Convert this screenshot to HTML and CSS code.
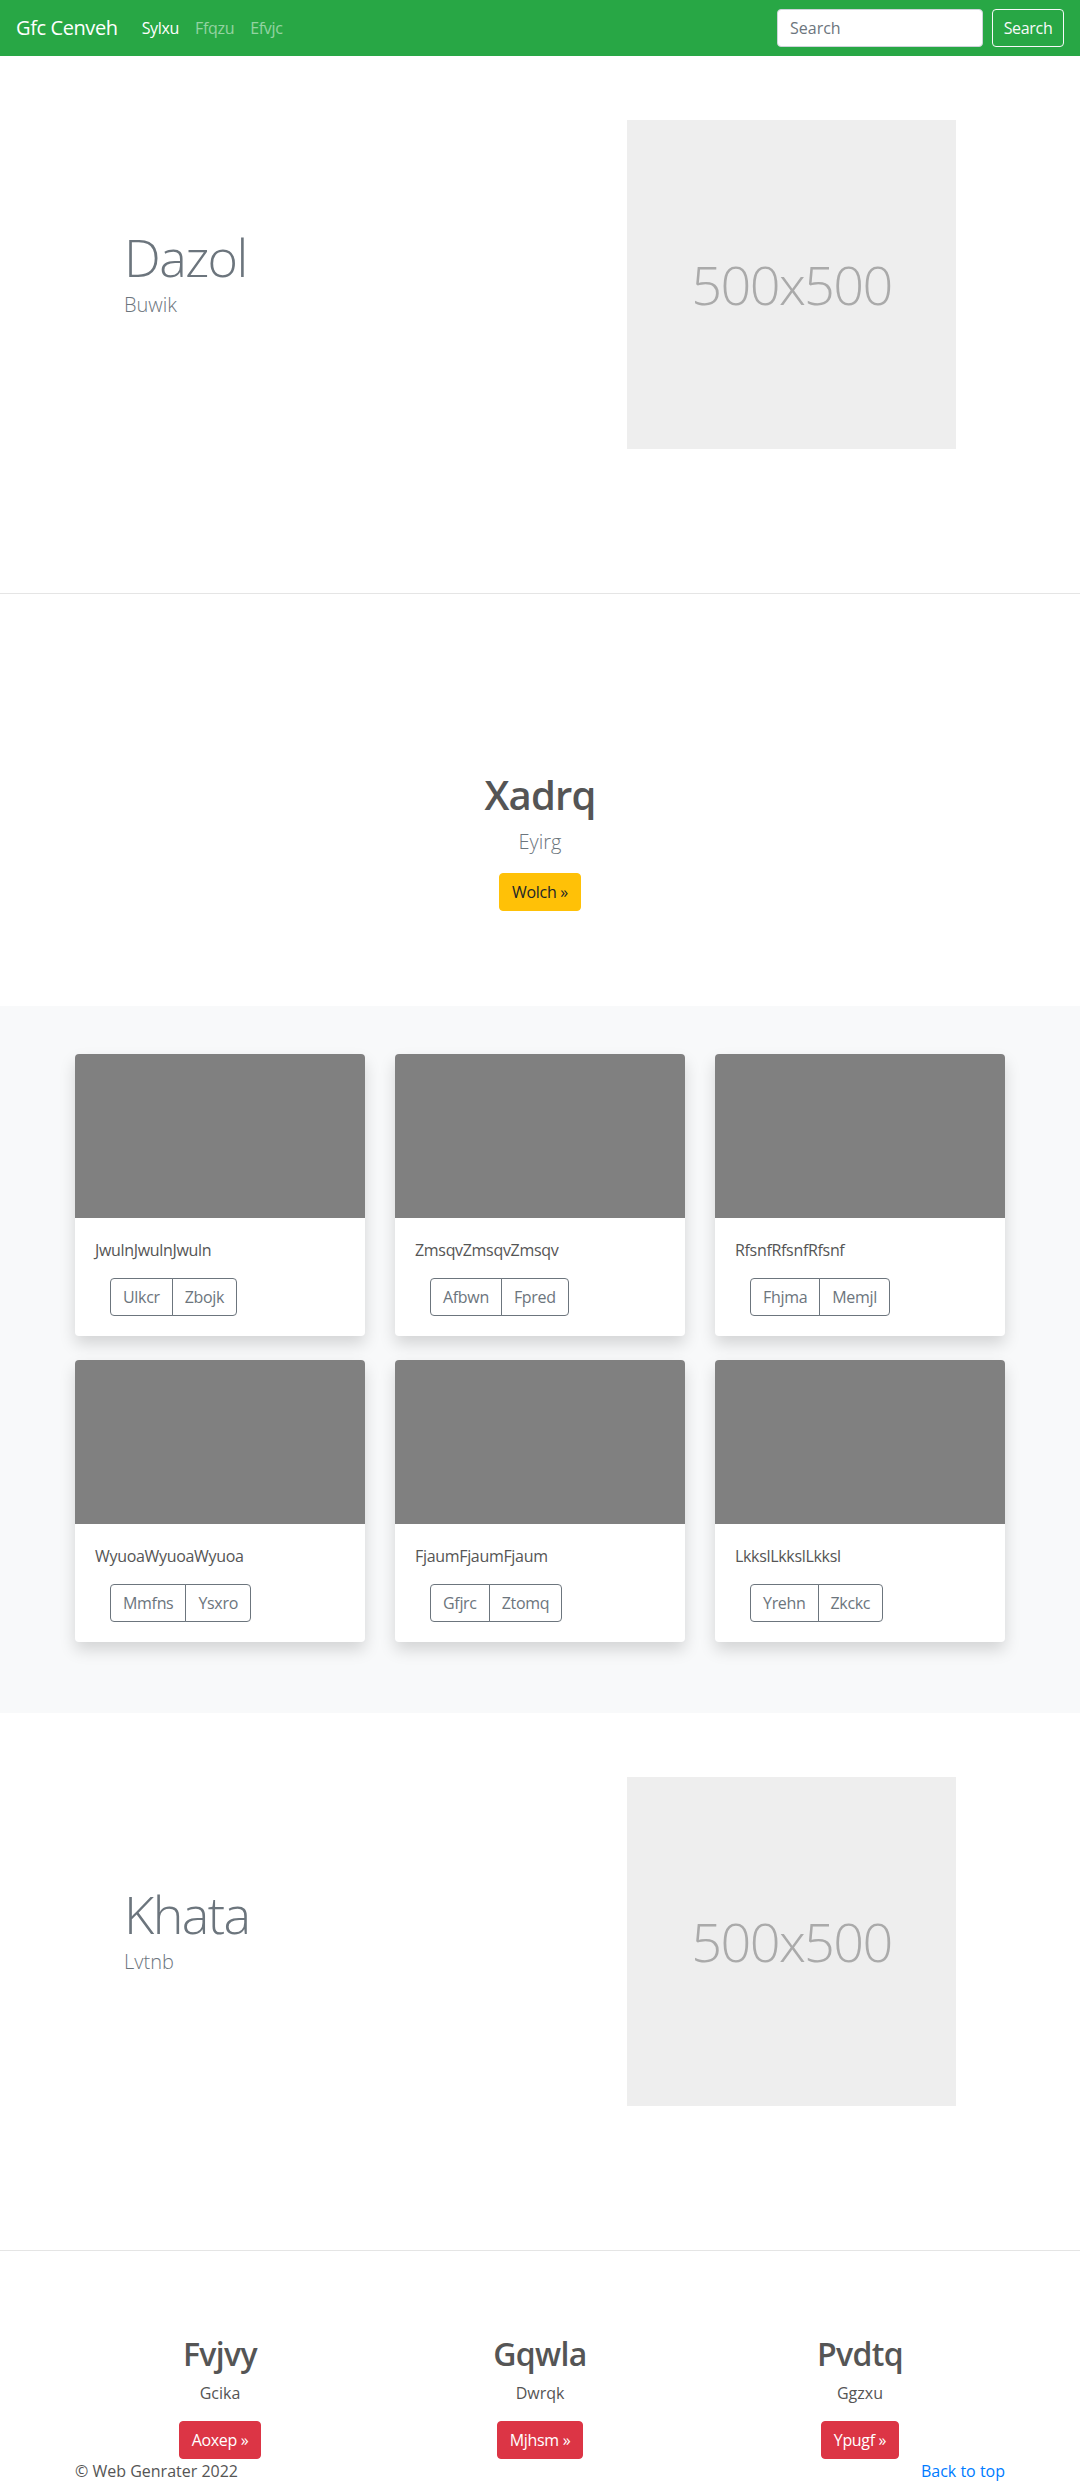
FILE: index.html
```html
<!DOCTYPE html>
<html lang="en">
<head>
<meta charset="utf-8">
<title>Gfc Cenveh</title>
<link rel="stylesheet" href="styles.css">
</head>
<body>
<header class="navbar">
  <a class="brand" href="#">Gfc Cenveh</a>
  <nav class="nav-links">
    <a class="nav-link active" href="#">Sylxu</a>
    <a class="nav-link" href="#">Ffqzu</a>
    <a class="nav-link" href="#">Efvjc</a>
  </nav>
  <form class="search">
    <input class="search-input" type="text" placeholder="Search">
    <button class="btn btn-outline-light" type="button">Search</button>
  </form>
</header>
<main>
  <section class="feature">
    <div class="feature-inner">
      <div class="feature-text">
        <h1 class="display">Dazol</h1>
        <p class="lead">Buwik</p>
      </div>
      <div class="feature-media">
        <div class="placeholder">500x500</div>
      </div>
    </div>
  </section>

  <section class="callout">
    <h1 class="callout-title">Xadrq</h1>
    <p class="lead">Eyirg</p>
    <a class="btn btn-warning" href="#">Wolch »</a>
  </section>

  <section class="album">
    <div class="album-grid">
      <div class="card">
        <div class="card-img"></div>
        <div class="card-body">
          <p class="card-text">JwulnJwulnJwuln</p>
          <div class="btn-group">
            <button class="btn btn-outline-secondary" type="button">Ulkcr</button>
            <button class="btn btn-outline-secondary" type="button">Zbojk</button>
          </div>
        </div>
      </div>
      <div class="card">
        <div class="card-img"></div>
        <div class="card-body">
          <p class="card-text">ZmsqvZmsqvZmsqv</p>
          <div class="btn-group">
            <button class="btn btn-outline-secondary" type="button">Afbwn</button>
            <button class="btn btn-outline-secondary" type="button">Fpred</button>
          </div>
        </div>
      </div>
      <div class="card">
        <div class="card-img"></div>
        <div class="card-body">
          <p class="card-text">RfsnfRfsnfRfsnf</p>
          <div class="btn-group">
            <button class="btn btn-outline-secondary" type="button">Fhjma</button>
            <button class="btn btn-outline-secondary" type="button">Memjl</button>
          </div>
        </div>
      </div>
      <div class="card">
        <div class="card-img"></div>
        <div class="card-body">
          <p class="card-text">WyuoaWyuoaWyuoa</p>
          <div class="btn-group">
            <button class="btn btn-outline-secondary" type="button">Mmfns</button>
            <button class="btn btn-outline-secondary" type="button">Ysxro</button>
          </div>
        </div>
      </div>
      <div class="card">
        <div class="card-img"></div>
        <div class="card-body">
          <p class="card-text">FjaumFjaumFjaum</p>
          <div class="btn-group">
            <button class="btn btn-outline-secondary" type="button">Gfjrc</button>
            <button class="btn btn-outline-secondary" type="button">Ztomq</button>
          </div>
        </div>
      </div>
      <div class="card">
        <div class="card-img"></div>
        <div class="card-body">
          <p class="card-text">LkkslLkkslLkksl</p>
          <div class="btn-group">
            <button class="btn btn-outline-secondary" type="button">Yrehn</button>
            <button class="btn btn-outline-secondary" type="button">Zkckc</button>
          </div>
        </div>
      </div>
    </div>
  </section>

  <section class="feature">
    <div class="feature-inner">
      <div class="feature-text">
        <h1 class="display">Khata</h1>
        <p class="lead">Lvtnb</p>
      </div>
      <div class="feature-media">
        <div class="placeholder">500x500</div>
      </div>
    </div>
  </section>

  <section class="columns">
    <div class="columns-inner">
      <div class="column">
        <h2 class="column-title">Fvjvy</h2>
        <p class="column-text">Gcika</p>
        <a class="btn btn-danger" href="#">Aoxep »</a>
      </div>
      <div class="column">
        <h2 class="column-title">Gqwla</h2>
        <p class="column-text">Dwrqk</p>
        <a class="btn btn-danger" href="#">Mjhsm »</a>
      </div>
      <div class="column">
        <h2 class="column-title">Pvdtq</h2>
        <p class="column-text">Ggzxu</p>
        <a class="btn btn-danger" href="#">Ypugf »</a>
      </div>
    </div>
  </section>
</main>
<footer class="footer">
  <p class="copyright">© Web Genrater 2022</p>
  <p class="back"><a href="#">Back to top</a></p>
</footer>
</body>
</html>
```

FILE: styles.css
```css
html, body {
  margin: 0;
  padding: 0;
}

body {
  font-family: "Open Sans", "Noto Sans", "DejaVu Sans", sans-serif;
  font-size: 16px;
  line-height: 1.5;
  color: #555;
  background: #fff;
}

/* Navbar */
.navbar {
  display: flex;
  align-items: center;
  height: 56px;
  padding: 0 16px;
  box-sizing: border-box;
  background: #28a745;
}

.brand {
  font-size: 20px;
  line-height: 30px;
  color: #fff;
  text-decoration: none;
  margin-right: 16px;
  letter-spacing: -0.02em;
}

.nav-links {
  display: flex;
}

.nav-link {
  padding: 8px;
  color: rgba(255, 255, 255, 0.5);
  text-decoration: none;
  letter-spacing: -0.02em;
}

.nav-link.active {
  color: #fff;
}

.search {
  margin: 0 0 0 auto;
  display: flex;
  gap: 9px;
}

.search-input {
  width: 206px;
  height: 38px;
  box-sizing: border-box;
  padding: 6px 12px;
  border: 1px solid #ced4da;
  border-radius: 4px;
  font-family: inherit;
  font-size: 16px;
  color: #495057;
  background: #fff;
  outline: none;
}

.search-input::placeholder {
  color: #6c757d;
}

/* Buttons */
.btn {
  display: inline-block;
  box-sizing: border-box;
  font-family: inherit;
  font-size: 16px;
  line-height: 24px;
  padding: 6px 12px;
  border: 1px solid transparent;
  border-radius: 4px;
  background: transparent;
  text-decoration: none;
  cursor: pointer;
  letter-spacing: -0.02em;
}

.btn-outline-light {
  width: 72px;
  padding: 6px 0;
  text-align: center;
  color: #f8f9fa;
  border-color: #f8f9fa;
}

.btn-warning {
  color: #212529;
  background: #ffc107;
  border-color: #ffc107;
}

.btn-danger {
  color: #fff;
  background: #dc3545;
  border-color: #dc3545;
}

.btn-outline-secondary {
  color: #6c757d;
  border-color: #6c757d;
  background: transparent;
}

/* Feature sections */
.feature {
  border-bottom: 1px solid #e5e5e5;
}

.feature-inner {
  max-width: 960px;
  margin: 0 auto;
  display: flex;
  align-items: center;
  padding: 64px 0 144px;
}

.feature-text {
  flex: 0 0 480px;
  box-sizing: border-box;
  padding: 0 0 10px 64px;
}

.display {
  margin: 0;
  font-size: 52px;
  font-weight: 300;
  line-height: 67px;
  color: #6c757d;
  letter-spacing: -0.03em;
}

.lead {
  margin: 0 0 16px;
  font-size: 20px;
  font-weight: 300;
  line-height: 1.5;
  color: #6c757d;
}

.feature-media {
  padding-left: 87px;
}

.placeholder {
  width: 329px;
  height: 329px;
  display: flex;
  align-items: center;
  justify-content: center;
  background: #eee;
  color: #aaa;
  font-size: 54px;
  font-weight: 300;
  letter-spacing: -0.03em;
}

/* Callout */
.callout {
  display: flex;
  flex-direction: column;
  align-items: center;
  padding: 177px 0 95px;
}

.callout-title {
  margin: 0 0 8px;
  font-size: 40px;
  font-weight: 600;
  line-height: 1.2;
  color: #555;
  letter-spacing: -0.02em;
}

/* Album */
.album {
  background: #f8f9fa;
  padding: 48px 0 71px;
}

.album-grid {
  max-width: 930px;
  margin: 0 auto;
  display: grid;
  grid-template-columns: repeat(3, 1fr);
  gap: 24px 30px;
}

.card {
  background: #fff;
  border-radius: 4px;
  overflow: hidden;
  box-shadow: 0 8px 16px rgba(0, 0, 0, 0.15);
}

.card-img {
  height: 164px;
  background: #808080;
}

.card-body {
  padding: 20px;
}

.card-text {
  margin: 0 0 16px;
  letter-spacing: -0.02em;
}

.btn-group {
  display: inline-flex;
  margin-left: 15px;
}

.btn-group .btn:first-child {
  border-radius: 4px 0 0 4px;
}

.btn-group .btn + .btn {
  margin-left: -1px;
  border-radius: 0 4px 4px 0;
}

/* Columns */
.columns {
  padding-top: 84px;
}

.columns-inner {
  max-width: 960px;
  margin: 0 auto;
  display: grid;
  grid-template-columns: repeat(3, 1fr);
}

.column {
  display: flex;
  flex-direction: column;
  align-items: center;
}

.column-title {
  margin: 0 0 8px;
  font-size: 32px;
  font-weight: 600;
  line-height: 1.2;
  color: #555;
  letter-spacing: -0.02em;
}

.column-text {
  margin: 0 0 16px;
}

/* Footer */
.footer {
  max-width: 930px;
  margin: 0 auto;
  display: flex;
  justify-content: space-between;
  padding-bottom: 32px;
}

.footer p {
  margin: 0 0 16px;
}

.back a {
  color: #007bff;
  text-decoration: none;
}
```
